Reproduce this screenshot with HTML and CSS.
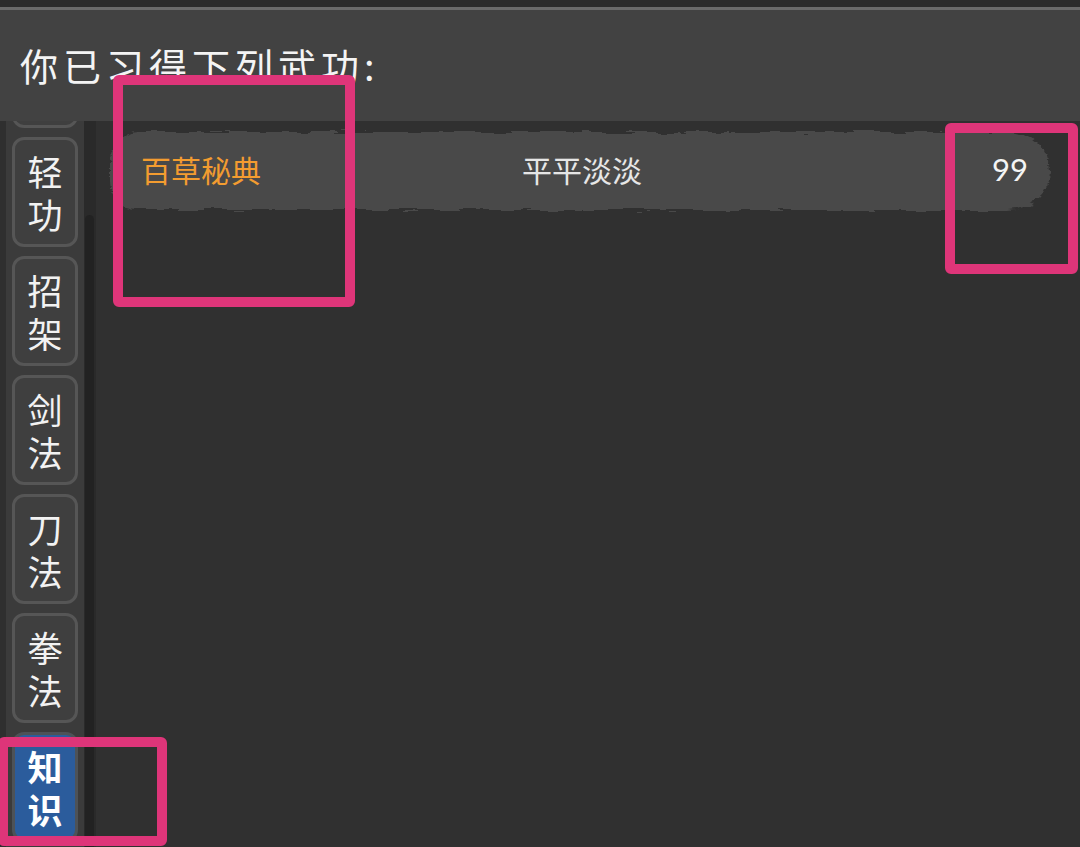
FILE: index.html
```html
<!DOCTYPE html>
<html lang="zh-CN">
<head>
  <meta charset="UTF-8">
  <meta name="viewport" content="width=device-width, initial-scale=1.0">
  <title>武功</title>
  <link rel="stylesheet" href="styles.css">
</head>
<body>
  <!-- rough edge for the ink-brush row background -->
  <svg class="defs" width="0" height="0" aria-hidden="true">
    <filter id="brush" x="-5%" y="-30%" width="110%" height="160%">
      <feTurbulence type="fractalNoise" baseFrequency="0.035 0.25" numOctaves="3" seed="4" result="noise"/>
      <feDisplacementMap in="SourceGraphic" in2="noise" scale="10" xChannelSelector="R" yChannelSelector="G"/>
    </filter>
  </svg>

  <div class="screen">
    <div class="status-strip"></div>
    <div class="rule"></div>
    <header class="title-bar">你已习得下列武功:</header>

    <div class="content">
      <nav class="sidebar">
        <div class="tab-list">
          <!-- scrolled past, only its lower edge shows -->
          <button class="tab" aria-hidden="true"></button>
          <button class="tab">轻功</button>
          <button class="tab">招架</button>
          <button class="tab">剑法</button>
          <button class="tab">刀法</button>
          <button class="tab">拳法</button>
          <button class="tab active">知识</button>
        </div>
      </nav>
      <div class="scroll-track"><div class="scroll-thumb"></div></div>

      <main class="skills">
        <div class="skill-row">
          <span class="skill-name">百草秘典</span>
          <span class="skill-level">平平淡淡</span>
          <span class="skill-value">99</span>
        </div>
      </main>
    </div>

    <!-- highlight marks -->
    <div class="mark mark-name"></div>
    <div class="mark mark-value"></div>
    <div class="mark mark-tab"></div>
  </div>
</body>
</html>
```

FILE: styles.css
```css
html, body {
  margin: 0;
  padding: 0;
}
body {
  background: #303030;
  font-family: "Noto Sans CJK SC", "Noto Sans", sans-serif;
  color: #f2f2f2;
}
.defs {
  position: absolute;
}
.screen {
  position: relative;
  width: 1080px;
  height: 847px;
  overflow: hidden;
  display: flex;
  flex-direction: column;
}
.status-strip {
  height: 7px;
  background: #2b2b2b;
}
.rule {
  height: 3px;
  background: #6a6a6a;
}
.title-bar {
  height: 111px;
  box-sizing: border-box;
  background: #424242;
  padding: 32px 0 0 20px;
  font-size: 38px;
  line-height: 46px;
  letter-spacing: 5px;
  color: #f4f4f4;
}

.content {
  flex: 1;
  display: flex;
  min-height: 0;
}
.sidebar {
  width: 78px;
  border-left: 6px solid #2f2f2f;
  background: #3b3b3b;
  overflow: hidden;
}
.tab-list {
  margin-top: -103px;
  padding-left: 6px;
  display: flex;
  flex-direction: column;
  gap: 9px;
}
.tab {
  width: 66px;
  height: 110px;
  box-sizing: border-box;
  border: 3px solid #565656;
  border-radius: 12px;
  background: #3f3f3f;
  color: #f2f2f2;
  font-family: inherit;
  font-size: 35px;
  line-height: 43px;
  padding: 7px 12px;
  text-align: center;
  word-break: break-all;
}
.tab.active {
  background: #2b5c9c;
  border-color: #4d5257;
  font-weight: 700;
  color: #fff;
}
.scroll-track {
  width: 12px;
  background: #2a2a2a;
  padding-top: 94px;
  box-sizing: border-box;
}
.scroll-thumb {
  width: 9px;
  height: 100%;
  margin-left: 1px;
  background: #222;
  border-radius: 5px 5px 0 0;
}

.skills {
  flex: 1;
  padding: 7px 30px 0 14px;
}
.skill-row {
  position: relative;
  height: 82px;
  display: flex;
  align-items: center;
  padding: 0 22px 0 31px;
  font-size: 30px;
}
.skill-row::before {
  content: "";
  position: absolute;
  inset: 4px 0 0 0;
  background: #4a4a4a;
  border-radius: 30px 44px 44px 30px / 30px 40px 40px 30px;
  filter: url(#brush);
  z-index: -1;
}
.skill-name {
  width: 381px;
  color: #f39c30;
}
.skill-level {
  flex: 1;
  color: #e6e6e6;
}
.skill-value {
  font-family: "Lato", "Noto Sans", sans-serif;
  font-size: 31px;
  color: #f4f4f4;
}

.mark {
  position: absolute;
  border: 10px solid #de3579;
  border-radius: 6px;
  box-sizing: border-box;
}
.mark-name {
  left: 113px;
  top: 75px;
  width: 242px;
  height: 232px;
}
.mark-value {
  left: 945px;
  top: 123px;
  width: 133px;
  height: 151px;
}
.mark-tab {
  left: -2px;
  top: 737px;
  width: 169px;
  height: 109px;
}
```
